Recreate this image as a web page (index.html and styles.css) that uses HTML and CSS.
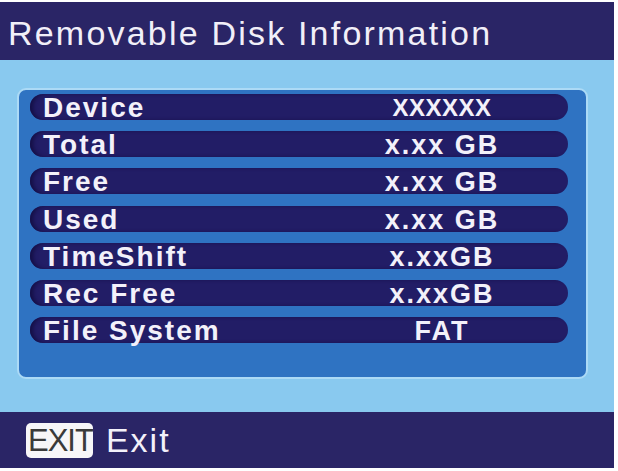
FILE: index.html
```html
<!DOCTYPE html>
<html>
<head>
<meta charset="utf-8">
<link rel="stylesheet" href="styles.css">
</head>
<body>
<div class="screen">
  <div class="header"><span class="title">Removable Disk Information</span></div>
  <div class="main">
    <div class="panel">
      <div class="row"><span class="label">Device</span><span class="value caps">xxxxxx</span></div>
      <div class="row"><span class="label">Total</span><span class="value">x.xx GB</span></div>
      <div class="row"><span class="label">Free</span><span class="value">x.xx GB</span></div>
      <div class="row"><span class="label">Used</span><span class="value">x.xx GB</span></div>
      <div class="row"><span class="label">TimeShift</span><span class="value">x.xxGB</span></div>
      <div class="row"><span class="label">Rec Free</span><span class="value">x.xxGB</span></div>
      <div class="row"><span class="label">File System</span><span class="value">FAT</span></div>
    </div>
  </div>
  <div class="footer">
    <span class="key">EXIT</span><span class="key-label">Exit</span>
  </div>
</div>
</body>
</html>
```
FILE: styles.css
```css
html, body {
  margin: 0;
  padding: 0;
  background: #ffffff;
}
body {
  width: 618px;
  height: 471px;
  overflow: hidden;
  font-family: "Liberation Sans", Arial, sans-serif;
  color: #f3f1fa;
}
.screen {
  width: 614px;
  margin-top: 2px;
  display: flex;
  flex-direction: column;
}
.header {
  height: 58px;
  background: #2a2566;
  display: flex;
  align-items: center;
  padding-left: 8px;
  box-sizing: border-box;
}
.title {
  font-size: 34px;
  letter-spacing: 2.2px;
  line-height: 34px;
  padding-top: 4px;
  color: #f1eff8;
}
.main {
  height: 352px;
  background: #89c9ef;
  padding: 28px 0 0 17px;
  box-sizing: border-box;
}
.panel {
  width: 571px;
  height: 291px;
  box-sizing: border-box;
  background: #2f73c2;
  border: 2px solid #acdaf6;
  border-radius: 9px;
  padding: 4px 18px 0 11px;
  display: flex;
  flex-direction: column;
  gap: 11.2px;
}
.row {
  height: 26px;
  border-radius: 13px;
  background: #221d66;
  box-shadow: inset 4px 0 4px -1px #140f45;
  display: grid;
  grid-template-columns: 286px 1fr;
  align-items: center;
  line-height: 26px;
}
.label {
  font-size: 28px;
  font-weight: bold;
  letter-spacing: 2px;
  padding-left: 13px;
  padding-top: 1px;
  white-space: nowrap;
}
.value {
  font-size: 27px;
  font-weight: bold;
  letter-spacing: 2px;
  text-align: center;
  padding-top: 1px;
  white-space: nowrap;
}
.caps {
  text-transform: uppercase;
  font-size: 24px;
  letter-spacing: 0.5px;
}
.footer {
  height: 56px;
  background: #2a2566;
  display: flex;
  align-items: center;
  padding-left: 26px;
  box-sizing: border-box;
}
.key {
  background: #f7f6f8;
  color: #3a3a3a;
  font-size: 31px;
  line-height: 35px;
  height: 35px;
  padding-left: 2px;
  border-radius: 5px;
  letter-spacing: -1px;
}
.key-label {
  font-size: 34px;
  letter-spacing: 2px;
  margin-left: 13px;
  color: #f3f1fa;
}
```
